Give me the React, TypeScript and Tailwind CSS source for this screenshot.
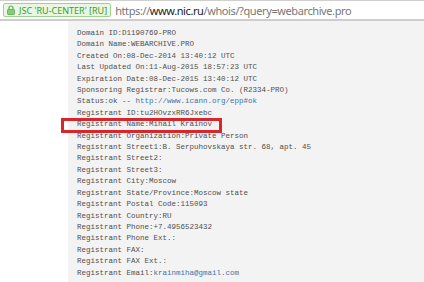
const lines: { label: string; value: string }[] = [
  { label: "Domain ID:", value: "D1190769-PRO" },
  { label: "Domain Name:", value: "WEBARCHIVE.PRO" },
  { label: "Created On:", value: "08-Dec-2014 13:40:12 UTC" },
  { label: "Last Updated On:", value: "11-Aug-2015 18:57:23 UTC" },
  { label: "Expiration Date:", value: "08-Dec-2015 13:40:12 UTC" },
  { label: "Sponsoring Registrar:", value: "Tucows.com Co. (R2334-PRO)" },
  { label: "Status:", value: "ok -- " },
  { label: "Registrant ID:", value: "tu2HOvzxRR6Jxebc" },
  { label: "Registrant Name:", value: "Mihail Krainov" },
  { label: "Registrant Organization:", value: "Private Person" },
  { label: "Registrant Street1:", value: "B. Serpuhovskaya str. 68, apt. 45" },
  { label: "Registrant Street2:", value: "" },
  { label: "Registrant Street3:", value: "" },
  { label: "Registrant City:", value: "Moscow" },
  { label: "Registrant State/Province:", value: "Moscow state" },
  { label: "Registrant Postal Code:", value: "115093" },
  { label: "Registrant Country:", value: "RU" },
  { label: "Registrant Phone:", value: "+7.4956523432" },
  { label: "Registrant Phone Ext.:", value: "" },
  { label: "Registrant FAX:", value: "" },
  { label: "Registrant FAX Ext.:", value: "" },
  { label: "Registrant Email:", value: "" },
];

export default function App() {
  return (
    <div className="w-[424px] h-[282px] overflow-hidden bg-white flex flex-col">
      {/* address bar */}
      <div className="h-[21px] shrink-0 border-t border-[#d0d0d0] border-b-2 border-b-[#cdcdcd] flex items-center pl-[3px] gap-[4px] bg-white">
        <div className="h-[14px] flex items-center gap-[4px] px-[3px] bg-[#e9f6e2] border border-[#9fd28f] rounded-[2px] text-[#38a02c] text-[9px] leading-none font-['Noto_Sans',sans-serif]">
          <svg width="8" height="10" viewBox="0 0 8 10">
            <path d="M2 4.5V3a2 2 0 0 1 4 0v1.5" fill="none" stroke="#57aa48" strokeWidth="1.2" />
            <rect x="0.5" y="4.5" width="7" height="5" rx="0.8" fill="#8cc97c" stroke="#57aa48" strokeWidth="0.8" />
          </svg>
          <span>JSC 'RU-CENTER' [RU]</span>
        </div>
        <div className="text-[11px] tracking-[-0.4px] leading-none font-['Noto_Sans',sans-serif] text-[#777] whitespace-nowrap">
          https://<span className="text-[#222]">www.nic.ru</span>/whois/?query=webarchive.pro
        </div>
      </div>

      {/* page body */}
      <div className="flex flex-1">
        <div className="w-[68px] shrink-0 bg-white" />
        <div className="flex-1 bg-[#f3f3f3] pt-[7px] pl-[9px] relative">
          <div className="font-['Liberation_Mono',monospace] text-[7.5px] leading-[11.4px] text-[#505050] whitespace-pre">
            {lines.map((l, i) => (
              <div key={i}>
                {l.label}
                {l.value}
                {l.label === "Status:" && <span className="text-[#3f73a8]">http://www.icann.org/epp#ok</span>}
                {l.label === "Registrant Email:" && <span className="text-[#3f73a8]">krainmiha@gmail.com</span>}
              </div>
            ))}
          </div>
          {/* red highlight around Registrant Name */}
          <div className="absolute left-[-7px] top-[97px] w-[161px] h-[15px] border-[3px] border-[#d8262d]" />
        </div>
      </div>
    </div>
  );
}
